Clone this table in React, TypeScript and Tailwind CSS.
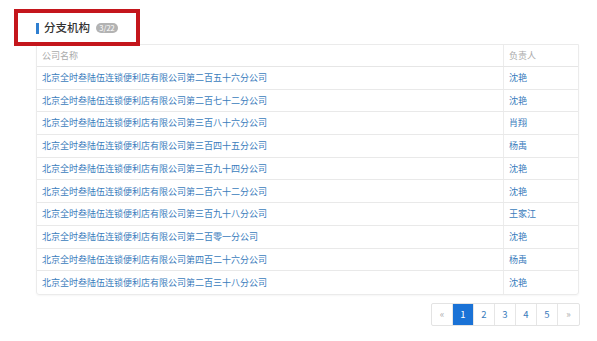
export default function App() {
  const rows = [
    { name: '北京全时叁陆伍连锁便利店有限公司第二百五十六分公司', owner: '沈艳' },
    { name: '北京全时叁陆伍连锁便利店有限公司第二百七十二分公司', owner: '沈艳' },
    { name: '北京全时叁陆伍连锁便利店有限公司第三百八十六分公司', owner: '肖翔' },
    { name: '北京全时叁陆伍连锁便利店有限公司第三百四十五分公司', owner: '杨禹' },
    { name: '北京全时叁陆伍连锁便利店有限公司第三百九十四分公司', owner: '沈艳' },
    { name: '北京全时叁陆伍连锁便利店有限公司第二百六十二分公司', owner: '沈艳' },
    { name: '北京全时叁陆伍连锁便利店有限公司第三百九十八分公司', owner: '王家江' },
    { name: '北京全时叁陆伍连锁便利店有限公司第二百零一分公司', owner: '沈艳' },
    { name: '北京全时叁陆伍连锁便利店有限公司第四百二十六分公司', owner: '杨禹' },
    { name: '北京全时叁陆伍连锁便利店有限公司第二百三十八分公司', owner: '沈艳' },
  ]
  const pages = ['«', '1', '2', '3', '4', '5', '»']

  return (
    <main className="relative w-[597px] h-[341px] bg-white overflow-hidden font-['Noto_Sans_CJK_SC','Noto_Sans',sans-serif]">
      <div className="pl-[36px] pr-[18px] pt-[22px]">
        {/* Heading */}
        <div className="flex items-center h-[12px] gap-[5px]">
          <div className="w-[3px] h-[11px] bg-[#2f7fd0]"></div>
          <h1 className="text-[11.5px] leading-none font-medium text-[#333]">分支机构</h1>
          <span className="ml-[1px] h-[10px] w-[22px] text-center rounded-full bg-[#b3b3b3] text-white text-[7.5px] leading-[10px]">3/22</span>
        </div>

        {/* Table */}
        <div className="mt-[10px] border border-[#ebebeb] rounded-b-[3px] shadow-[0_1px_2px_rgba(0,0,0,0.04)]">
          <div className="flex h-[22px] border-b border-[#e6e6e6] text-[9px] text-[#aaa]">
            <div className="w-[467px] pl-[5px] flex items-center border-r border-[#ececec]">公司名称</div>
            <div className="flex-1 pl-[5px] flex items-center">负责人</div>
          </div>
          {rows.map((r, i) => (
            <div
              key={i}
              className={`flex h-[22.7px] text-[9px] text-[#3a7cbc] ${i < rows.length - 1 ? 'border-b border-[#e9e9e9]' : ''}`}
            >
              <div className="w-[467px] pl-[5px] flex items-center border-r border-[#ececec]">{r.name}</div>
              <div className="flex-1 pl-[5px] flex items-center">{r.owner}</div>
            </div>
          ))}
        </div>

        {/* Pagination */}
        <div className="mt-[8px] flex justify-end -mr-[1px]">
          <div className="flex border border-[#e3e3e3] rounded-[2px]">
            {pages.map((p, i) => (
              <div
                key={i}
                className={`w-[21px] h-[21px] flex items-center justify-center text-[9.5px] ${
                  p === '1'
                    ? 'bg-[#1a72d6] text-white'
                    : p === '«' || p === '»'
                      ? 'text-[#aaa]'
                      : 'text-[#3a7cbc]'
                } ${i < pages.length - 1 ? 'border-r border-[#e6e6e6]' : ''}`}
              >
                {p}
              </div>
            ))}
          </div>
        </div>
      </div>

      {/* annotation box */}
      <div className="absolute left-[14px] top-[9px] w-[126px] h-[37px] border-[4px] border-[#c4161c]"></div>
    </main>
  )
}
